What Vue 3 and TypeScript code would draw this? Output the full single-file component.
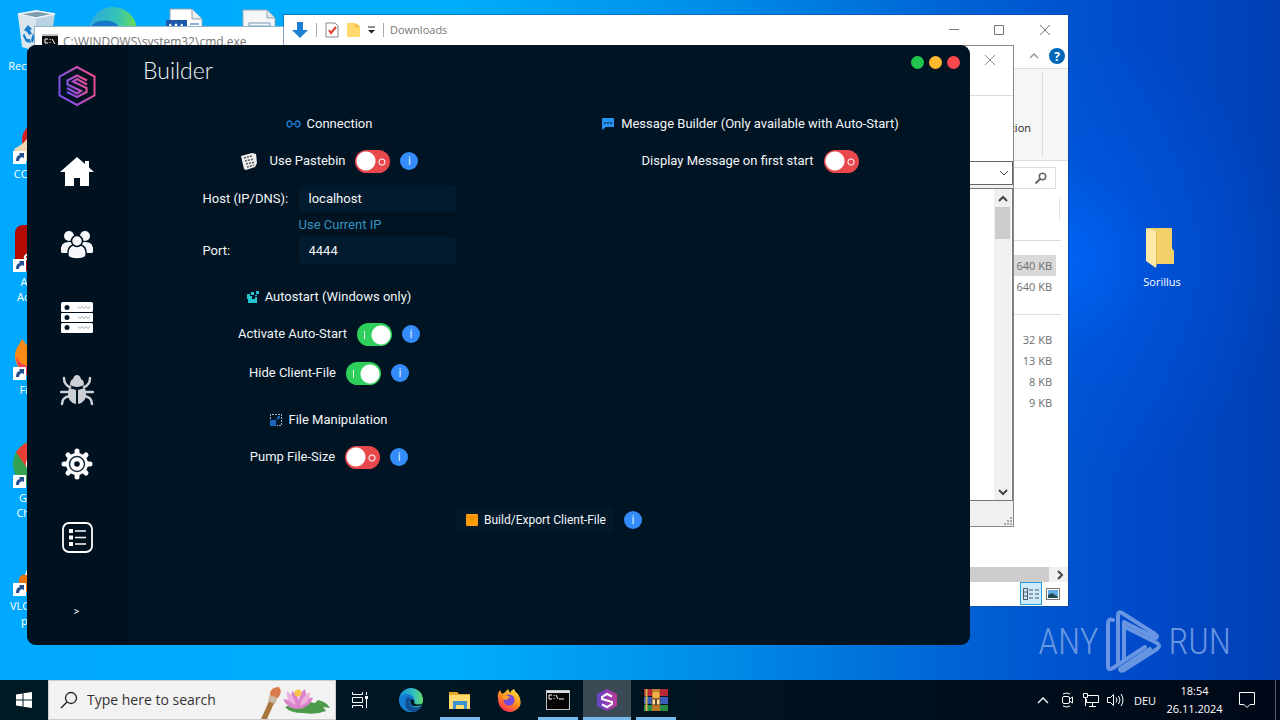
<script setup lang="ts">
import { ref } from 'vue'

interface FileGroup {
  id: string
  rows: { size: string; selected: boolean }[]
}

const usePastebin = ref(false)
const autoStart = ref(true)
const hideClient = ref(true)
const pumpSize = ref(false)
const displayMessage = ref(false)
const host = ref('localhost')
const port = ref('4444')

const groups: FileGroup[] = [
  { id: 'recent', rows: [{ size: '640 KB', selected: true }, { size: '640 KB', selected: false }] },
  {
    id: 'older',
    rows: [
      { size: '32 KB', selected: false },
      { size: '13 KB', selected: false },
      { size: '8 KB', selected: false },
      { size: '9 KB', selected: false },
    ],
  },
]
</script>

<template>
  <div class="screen">
    <main class="desktop">
      <div class="shortcuts">
        <div class="shortcut">
          <svg viewBox="0 0 48 48" width="48" height="48">
            <path d="M5 6 22 2 42 6 36 42 10 39Z" fill="#b9d3e2" />
            <path d="M5 6 23 10 42 6 24 3Z" fill="#7f9cae" stroke="#eef5f9" stroke-width="1.5" />
            <path d="M5 7 23 11 22 43 9 39Z" fill="#d9e6ee" />
            <path d="M11 22l4-5 4 4-2 1 2 4-3 1-2-3zM11 25l3 6h3l1 4-5-1-3-6zM20 25l2 6-3 4-1-3z" fill="#1c7fd0" />
          </svg>
          <span>Recycle Bin</span>
        </div>
        <div class="shortcut">
          <svg viewBox="0 0 48 48" width="48" height="48">
            <circle cx="27" cy="24" r="18" fill="#d8201f" />
            <path d="M1 33Q12 28 18 17l12 10-6 18H5Z" fill="#f0d9b0" />
            <rect y="35" width="13" height="13" fill="#fff" />
            <path d="M3 45q0-6 4-6l-1-2h5v5l-2-1q-3 1-3 4z" fill="#24508f" />
          </svg>
          <span>CCleaner</span>
        </div>
        <div class="shortcut">
          <svg viewBox="0 0 48 48" width="48" height="48">
            <rect x="2" y="1" width="46" height="46" rx="8" fill="#b30b00" />
            <path d="M12 34c-3-5 24-10 25-5S24 25 22 14s7-4 1 8-10 15-11 12z" fill="none" stroke="#fff" stroke-width="2" />
            <rect y="35" width="13" height="13" fill="#fff" />
            <path d="M3 45q0-6 4-6l-1-2h5v5l-2-1q-3 1-3 4z" fill="#24508f" />
          </svg>
          <span>Adobe<br>Acrobat</span>
        </div>
        <div class="shortcut">
          <svg viewBox="0 0 48 48" width="48" height="48">
            <path d="M2 26C1 17 6 14 9 7q3 3 4 6Q25 1 38 10q9 8 8 20Q42 45 26 46 5 44 2 26Z" fill="#ff8a16" />
            <path d="M3 24q5 14 25 10L24 46Q5 44 3 24Z" fill="#ff3c55" />
            <circle cx="25" cy="26" r="10" fill="#7542e5" />
            <rect y="35" width="13" height="13" fill="#fff" />
            <path d="M3 45q0-6 4-6l-1-2h5v5l-2-1q-3 1-3 4z" fill="#24508f" />
          </svg>
          <span>Firefox</span>
        </div>
        <div class="shortcut">
          <svg viewBox="0 0 48 48" width="48" height="48">
            <circle cx="24" cy="24" r="24" fill="#35a153" />
            <path d="M3 12Q14-3 30 1q12 3 16 13H24L14 28Z" fill="#ec3e34" />
            <path d="M46 14q6 20-12 32H24l10-16-2-16Z" fill="#fbc116" />
            <circle cx="24" cy="24" r="11" fill="#fff" />
            <circle cx="24" cy="24" r="8" fill="#4285f4" />
            <rect y="35" width="13" height="13" fill="#fff" />
            <path d="M3 45q0-6 4-6l-1-2h5v5l-2-1q-3 1-3 4z" fill="#24508f" />
          </svg>
          <span>Google<br>Chrome</span>
        </div>
        <div class="shortcut">
          <svg viewBox="0 0 48 48" width="48" height="48">
            <path d="M20 3h8l10 30H10Z" fill="#fff" />
            <path d="M17 12h14l3 9H14ZM6 31q2-5 6-4h24l6 17H5Z" fill="#e9740c" />
            <rect y="35" width="13" height="13" fill="#fff" />
            <path d="M3 45q0-6 4-6l-1-2h5v5l-2-1q-3 1-3 4z" fill="#24508f" />
          </svg>
          <span>VLC media<br>player</span>
        </div>
      </div>

      <div class="shortcuts-top">
        <svg viewBox="0 0 48 48" width="48" height="48">
          <defs>
            <linearGradient id="edgeTop" x1="0" x2="1"><stop offset="0" stop-color="#2fa9e0" /><stop offset=".6" stop-color="#35c3b5" /><stop offset="1" stop-color="#6edc52" /></linearGradient>
          </defs>
          <circle cx="24" cy="24" r="24" fill="url(#edgeTop)" />
          <path d="M0 22Q8 10 24 15q8 3 7 12L10 44Q0 36 0 22Z" fill="#1676c8" />
        </svg>
        <svg viewBox="0 0 48 48" width="48" height="48">
          <path d="M8 2h22l10 10v34H8Z" fill="#fff" stroke="#8aa0b0" />
          <path d="M30 2v10h10" fill="#e8eef2" stroke="#8aa0b0" />
          <rect x="4" y="13" width="21" height="22" fill="#1e58a8" />
          <path d="m8 17 3 12 3-12 3 12 3-12" fill="none" stroke="#fff" stroke-width="2" />
          <path d="M28 17h9M28 21h9" stroke="#1e58a8" />
        </svg>
        <svg viewBox="0 0 48 48" width="48" height="48">
          <path d="M8 3h24l8 8v35H8Z" fill="#f4f6f8" stroke="#9aa8b5" />
          <path d="M32 3v8h8" fill="#dde4ea" stroke="#9aa8b5" />
          <path d="M14 16h21v10H14ZM14 19h21" fill="none" stroke="#7898b8" />
        </svg>
      </div>

      <div class="folder">
        <svg viewBox="0 0 48 48" width="48" height="48">
          <path d="M10 4h24v20l2 3v13H12Z" fill="#f3cf68" />
          <path d="M8 4 18 7v37l-10-7Z" fill="#ffe9a6" />
          <path d="M18 7v37l1-5V8Z" fill="#e7bd53" />
        </svg>
        <span>Sorillus</span>
      </div>

      <div class="watermark">
        <span>ANY</span>
        <svg viewBox="0 0 56 64" width="56" height="64" fill="none" stroke="currentColor" stroke-width="4" stroke-linejoin="round" stroke-linecap="round">
          <path d="M8 10q-5-2-5 4v42q0 5 5 2l32-21M13 52V5q0-4 4-2l33 21q4 3 0 4l-31-16v38" />
          <path d="m20 17 32 16q4 3 0 6L19 60q-4 2-4-1l30-20" />
        </svg>
        <span>RUN</span>
      </div>

      <section class="window cmd">
        <svg viewBox="0 0 16 14" width="16" height="14">
          <rect width="16" height="14" fill="#111" /><path d="M0 1h16" stroke="#c0c0c0" stroke-width="2" />
          <path d="M6 5H3v4h3M8 5v1M8 8v1M10 5l3 5" fill="none" stroke="#fff" />
        </svg>
        <span>C:\WINDOWS\system32\cmd.exe</span>
      </section>

      <section class="window explorer">
        <header class="ex-title">
          <svg viewBox="0 0 16 18" width="16" height="18"><path d="M5 1h6v8h5l-8 8-8-8h5Z" fill="#1f7fd0" /></svg>
          <i class="bar"></i>
          <svg viewBox="0 0 14 16" width="14" height="16"><path d="M1 1h9l3 3v11H1Z" fill="#fff" stroke="#888" /><path d="m4 8 2 3 5-6" fill="none" stroke="#e0402a" stroke-width="2" /></svg>
          <svg viewBox="0 0 13 16" width="13" height="16"><path d="M0 1h8l5 3v11H0Z" fill="#ffd969" /><path d="M8 1v4h5" fill="#f3bd45" /></svg>
          <svg class="drop" viewBox="0 0 7 8" width="7" height="8"><path d="M0 1h7" stroke="#222" /><path d="M0 4h7L3.500 7.500Z" fill="#222" /></svg>
          <i class="bar"></i>
          <span>Downloads</span>
          <svg class="controls" viewBox="0 0 104 14" width="104" height="14" fill="none" stroke="#777">
            <path d="M1 6.500h10M46.500 2.500h9v9h-9ZM92 2l10 10M102 2 92 12" />
          </svg>
        </header>
        <div class="ex-tabs">
          <svg viewBox="0 0 10 6" width="10" height="6"><path d="m1 5 4-4 4 4" fill="none" stroke="#999" stroke-width="1.500" /></svg>
          <button class="help" type="button">?</button>
        </div>
        <div class="ribbon"><span>Selection</span></div>
        <div class="ex-search">
          <svg viewBox="0 0 12 12" width="12" height="12" fill="none" stroke="#666"><circle cx="7.500" cy="4.500" r="3.200" stroke-width="1.500" /><path d="m5 7-4.500 4.500" stroke-width="2" /></svg>
        </div>
        <div class="ex-body">
          <div class="col-head"></div>
          <table v-for="group in groups" :key="group.id">
            <tbody>
              <tr v-for="(row, i) in group.rows" :key="i" :class="{ selected: row.selected }">
                <td>{{ row.size }}</td>
              </tr>
            </tbody>
          </table>
        </div>
        <div class="h-scroll">
          <i></i>
          <svg viewBox="0 0 8 10" width="8" height="10"><path d="m2 1 4 4-4 4" fill="none" stroke="#444" stroke-width="2" /></svg>
        </div>
        <footer class="ex-status">
          <span class="view on">
            <svg viewBox="0 0 16 14" width="16" height="14" fill="none" stroke="#556"><path d="M.5 1.500h4v11h-4ZM.5 5h4M.5 9h4M6 3h4M12 3h4M6 7h4M12 7h4M6 11h4M12 11h4" /></svg>
          </span>
          <span class="view">
            <svg viewBox="0 0 14 12" width="14" height="12"><rect x=".5" y=".5" width="13" height="11" fill="#fff" stroke="#777" /><path d="M2 2h10v8H2Z" fill="#62aee0" /><path d="m2 7 4-2 6 4v1H2Z" fill="#214c55" /></svg>
          </span>
        </footer>
      </section>

      <section class="window dialog">
        <header>
          <svg viewBox="0 0 12 12" width="12" height="12"><path d="m1 1 10 10M11 1 1 11" stroke="#888" /></svg>
        </header>
        <div class="dlg-tools"></div>
        <div class="combo">
          <svg viewBox="0 0 10 6" width="10" height="6"><path d="m1 1 4 4 4-4" fill="none" stroke="#444" /></svg>
        </div>
        <div class="dlg-list">
          <div class="v-scroll">
            <svg viewBox="0 0 10 8" width="10" height="8"><path d="m1 6 4-4 4 4" fill="none" stroke="#444" stroke-width="2" /></svg>
            <i></i>
            <svg class="down" viewBox="0 0 10 8" width="10" height="8"><path d="m1 2 4 4 4-4" fill="none" stroke="#444" stroke-width="2" /></svg>
          </div>
        </div>
        <footer>
          <svg viewBox="0 0 10 10" width="10" height="10" fill="#aaa"><path d="M7 1h2v2H7zM7 4h2v2H7zM7 7h2v2H7zM4 4h2v2H4zM4 7h2v2H4zM1 7h2v2H1z" /></svg>
        </footer>
      </section>

      <section class="app">
        <nav>
          <svg class="logo" viewBox="0 0 38 42" width="38" height="42" fill="none" stroke="url(#brand)">
            <defs>
              <linearGradient id="brand" x1="0" y1=".7" x2="1" y2=".3"><stop offset="0" stop-color="#7550ee" /><stop offset="1" stop-color="#f0508c" /></linearGradient>
            </defs>
            <path d="m19 2 17.500 9.500v19L19 40 1.500 30.500v-19Z" stroke-width="2" />
            <path d="M29 15.500 19 10.500 9.500 15.500v4L23 26l-4 2.500L9 23M9 27l10 5 9.500-5v-4L15 16.500l4-2.500 10 5.500" stroke-width="2.200" />
          </svg>
          <button type="button" aria-label="Home">
            <svg viewBox="0 0 34 34" width="34" height="34" fill="#fff"><path d="M17 2 0 17h5v14h9v-8h6v8h9V17h5L29 12.500V6h-4v3Z" /></svg>
          </button>
          <button type="button" aria-label="Clients">
            <svg viewBox="0 0 34 34" width="34" height="34" fill="#f5f7fa">
              <circle cx="9" cy="8" r="5" /><circle cx="25" cy="8" r="5" />
              <path d="M1 24q-1-10 7-10h5v11H2zM33 24q1-10-7-10h-5v11h11z" />
              <g stroke="#001120" stroke-width="1.500"><path d="M8 28q-1-11 7-11h4q8 0 7 11-2 3-9 3t-9-3Z" /><circle cx="17" cy="13" r="5.500" /></g>
            </svg>
          </button>
          <button type="button" aria-label="Servers">
            <svg viewBox="0 0 34 34" width="34" height="34" fill="#fff">
              <rect x="1" y="1" width="32" height="10" rx="1.500" /><rect x="1" y="12" width="32" height="9" rx="1" /><rect x="1" y="22" width="32" height="10" rx="1.500" />
              <g fill="#071b29"><circle cx="7" cy="6.500" r="2.500" /><circle cx="7" cy="16.500" r="2.500" /><circle cx="7" cy="26.500" r="2.500" /></g>
              <path d="m18 5.500 2 2 2-2 2 2 2-2 2 2 2-2M18 15.500l2 2 2-2 2 2 2-2 2 2 2-2M18 25.500l2 2 2-2 2 2 2-2 2 2 2-2" fill="none" stroke="#99a4ad" />
            </svg>
          </button>
          <button type="button" aria-label="Debug">
            <svg viewBox="0 0 34 34" width="34" height="34" fill="#ccd0d5">
              <path d="M10 11q0-5 3-6 1-4 4-4t4 4q3 1 3 6-7 4-14 0ZM9 14q4 1 7 2v14Q7 28 8 18ZM25 14q-4 1-7 2v14q9-2 8-12Z" />
              <path d="M4 4q0 7 6 9M30 4q0 7-6 9M1 18h8M33 18h-8M10 22q-8 1-8 8M24 22q8 1 8 8" fill="none" stroke="#ccd0d5" stroke-width="2.500" stroke-linecap="round" />
            </svg>
          </button>
          <button type="button" aria-label="Settings">
            <svg viewBox="0 0 34 34" width="34" height="34">
              <g stroke="#fff" stroke-width="5" stroke-linecap="round"><path d="M17 4v26M4 17h26M8 8l18 18M26 8 8 26" /></g>
              <circle cx="17" cy="17" r="11" fill="#fff" />
              <circle cx="17" cy="17" r="7.500" fill="none" stroke="#1c2c39" stroke-width="1.500" />
              <circle cx="17" cy="17" r="2.800" fill="#001120" />
            </svg>
          </button>
          <button type="button" aria-label="Builder">
            <svg viewBox="0 0 34 34" width="34" height="34" fill="none" stroke="#fff">
              <rect x="3" y="3" width="29" height="29" rx="6" stroke-width="1.800" />
              <path d="M15 11h11M15 17.500h11M15 24h11" stroke-width="1.600" /><path d="M9 11h4M9 17.500h4M9 24h4" stroke-width="4" />
            </svg>
          </button>
          <button class="expand" type="button">&gt;</button>
        </nav>

        <div class="content">
          <header>
            <h1>Builder</h1>
            <div class="dots">
              <button class="green" type="button" aria-label="Minimize"></button>
              <button class="amber" type="button" aria-label="Maximize"></button>
              <button class="red" type="button" aria-label="Close"></button>
            </div>
          </header>

          <div class="columns">
            <div class="col">
              <h2>
                <svg viewBox="0 0 15 10" width="15" height="10" fill="none" stroke="#1c7fe0" stroke-width="1.300"><path d="M6 3.500Q5 2 3.500 2 1 2.500 1 5t2.500 3Q5 8 6 6.500M9 3.500Q10 2 11.500 2 14 2.500 14 5t-2.500 3Q10 8 9 6.500M4.500 5h6" /></svg>
                Connection
              </h2>
              <div class="row">
                <svg class="paste" viewBox="0 0 18 18" width="18" height="18">
                  <path d="m1 4 11-3 4 1 1 9-2 4-9 3-2-1Z" fill="#eee" />
                  <path d="m4 6 8-2M5 9l9-2M6 12l9-2M7 15l7-2" stroke="#555" stroke-width="1.500" stroke-dasharray="2 1" />
                </svg>
                <label for="pastebin">Use Pastebin</label>
                <input id="pastebin" v-model="usePastebin" class="toggle" type="checkbox">
                <button class="info" type="button">i</button>
              </div>
              <div class="form">
                <label for="host">Host (IP/DNS):</label>
                <input id="host" v-model="host" type="text">
                <a href="#">Use Current IP</a>
                <label for="port">Port:</label>
                <input id="port" v-model="port" type="text">
              </div>
              <hr>
              <h2>
                <svg viewBox="0 0 12 12" width="12" height="12" fill="#20c5cf"><path d="M0 3h3v2h2v3h3V6h2v6H1V8H0zM4 1h3v3H4zM9 0h3v3H9zM8 4h2v1H8z" /></svg>
                Autostart (Windows only)
              </h2>
              <div class="row">
                <label for="autostart">Activate Auto-Start</label>
                <input id="autostart" v-model="autoStart" class="toggle" type="checkbox">
                <button class="info" type="button">i</button>
              </div>
              <div class="row">
                <label for="hide">Hide Client-File</label>
                <input id="hide" v-model="hideClient" class="toggle" type="checkbox">
                <button class="info" type="button">i</button>
              </div>
              <hr>
              <h2>
                <svg viewBox="0 0 12 12" width="12" height="12"><path d="M.5 5V.5h11v11H7" fill="none" stroke="#9dbbd6" stroke-dasharray="2 1" /><path d="M0 6h6v6H0zM7 2h3v3l-1-1-2 2-1-1 2-2z" fill="#1667bd" /></svg>
                File Manipulation
              </h2>
              <div class="row">
                <label for="pump">Pump File-Size</label>
                <input id="pump" v-model="pumpSize" class="toggle" type="checkbox">
                <button class="info" type="button">i</button>
              </div>
            </div>
            <div class="col">
              <h2>
                <svg viewBox="0 0 14 12" width="14" height="12"><path d="M1 0h12v9H5l-4 3Z" fill="#2790f2" /><path d="M3 5h2M6 5h2M9 5h2" stroke="#0a3568" stroke-width="1.500" /></svg>
                Message Builder (Only available with Auto-Start)
              </h2>
              <div class="row">
                <label for="message">Display Message on first start</label>
                <input id="message" v-model="displayMessage" class="toggle" type="checkbox">
              </div>
            </div>
          </div>

          <div class="build-row">
            <button class="build" type="button">
              <svg viewBox="0 0 12 12" width="12" height="12"><rect width="12" height="12" rx="1" fill="#ff9d0a" /><path d="M0 3h12M4 3v2h4V3" fill="none" stroke="#e88600" /></svg>
              Build/Export Client-File
            </button>
            <button class="info" type="button">i</button>
          </div>
        </div>
      </section>
    </main>

    <footer class="taskbar">
      <button class="start" type="button" aria-label="Start">
        <svg viewBox="0 0 16 16" width="16" height="16" fill="#fff"><path d="M0 2.500 6.500 1.500v6H0zM7.500 1.300 16 0v7.500H7.500zM0 8.500h6.500v6L0 13.500zM7.500 8.500H16V16l-8.500-1.300z" /></svg>
      </button>
      <div class="search">
        <svg viewBox="0 0 18 18" width="18" height="18" fill="none" stroke="#222"><circle cx="11" cy="7" r="5.500" stroke-width="1.300" /><path d="m7 11-6 6" stroke-width="1.500" /></svg>
        <input type="text" placeholder="Type here to search" aria-label="Search">
        <svg class="art" viewBox="0 0 74 38" width="74" height="38">
          <path d="m11 18 5 2L8 38H2Z" fill="#a8753f" /><path d="m11 13 8 3-3 7-7-3z" fill="#c9b7a0" />
          <path d="M11 14q0-8 9-8 4 5-1 11Z" fill="#d87b4a" />
          <path d="M26 26q16-7 30-4l3-3q9 2 12 8l-7-1 3 4q-10 4-23 2-13 0-18-6Z" fill="#4c9b4b" />
          <path d="M24 18q8 0 12 6-5-7-3-14 6 4 7 10 0-8 6-12 3 8-2 13 4-5 10-4-3 9-14 11-12 0-16-10Z" fill="#dc83cb" />
          <path d="M28 10q7 5 9 14Q26 20 28 10ZM51 11q-8 4-10 14 10-3 10-14Z" fill="#eab0de" />
          <circle cx="39" cy="12" r="3.500" fill="#f5c443" />
        </svg>
      </div>
      <button class="task view-tasks" type="button" aria-label="Task View">
        <svg viewBox="0 0 16 16" width="16" height="16" fill="none" stroke="#fff"><path d="M.5 0v2.500h10V0M.5 16v-2.500h10V16M.5 5.500h10v5H.5ZM14.500 0v3M14.500 7v9" /><path d="M13 5.500h3" stroke-width="3" /></svg>
      </button>
      <button class="task" type="button" aria-label="Edge">
        <svg viewBox="0 0 26 26" width="26" height="26">
          <defs><linearGradient id="edge" x1="0" x2="1"><stop offset="0" stop-color="#1686cf" /><stop offset=".6" stop-color="#34c1c4" /><stop offset="1" stop-color="#67d96a" /></linearGradient></defs>
          <circle cx="13" cy="13" r="12" fill="url(#edge)" />
          <path d="M1 12q5-7 12-4 4 2 3 6-3 2-1 5 4 3 9-1-3 7-11 7Q2 24 1 12Z" fill="#137bd0" />
          <path d="M8 12q-3 11 7 13 7-1 9-7-5 4-10 2-5-4-1-8Q10 8 8 12Z" fill="#124f92" />
          <path d="M13 12q-2 5 2 7 4 1 9-1l1-2q-5 3-9 0 2-3-3-4Z" fill="#001823" />
        </svg>
      </button>
      <button class="task open" type="button" aria-label="File Explorer">
        <svg viewBox="0 0 24 20" width="24" height="20"><path d="M1 2h8l2 2h11v15H1Z" fill="#e8a92b" /><path d="M1 5h21v14H1Z" fill="#ffdb70" /><path d="M5 19v-8h14v8h-3v-4H8v4Z" fill="#3c91d0" /></svg>
      </button>
      <button class="task" type="button" aria-label="Firefox">
        <svg viewBox="0 0 26 26" width="26" height="26">
          <defs><linearGradient id="fox" x1=".8" y1="0" x2=".2" y2="1"><stop offset="0" stop-color="#ffe33b" /><stop offset=".5" stop-color="#ff8a20" /><stop offset="1" stop-color="#fb235b" /></linearGradient></defs>
          <path d="M2 11Q1 7 4 3l2 4q4-2 6-5l2 4q1-3 4-4 1 3 4 5 4 6 2 12-4 6-11 6Q2 23 2 11Z" fill="url(#fox)" />
          <circle cx="13" cy="13" r="5.500" fill="#7848dd" /><path d="M6 9q5-2 9 2-3-1-4 2-5 0-5-4Z" fill="#ff9d27" />
        </svg>
      </button>
      <button class="task open" type="button" aria-label="Command Prompt">
        <svg viewBox="0 0 24 20" width="24" height="20"><rect x=".5" y=".5" width="23" height="19" fill="#050505" stroke="#bfc4c7" /><path d="M1 2h22" stroke="#dce0e2" stroke-width="2" /><path d="M6 5H3v4h3M8 5v1M8 8v1M10 5l2 4M13 9h5" fill="none" stroke="#fff" /></svg>
      </button>
      <button class="task active" type="button" aria-label="Sorillus">
        <svg viewBox="0 0 22 24" width="22" height="24">
          <defs><linearGradient id="tile" x1="0" x2="1"><stop offset="0" stop-color="#6744cb" /><stop offset="1" stop-color="#ba3b9b" /></linearGradient></defs>
          <path d="m11 1 10 5v12l-10 5-10-5V6Z" fill="url(#tile)" />
          <path d="m16 8.500-5-2.500-5 3v2l10 3v2l-5 3-5-2.500" fill="none" stroke="#fff" stroke-width="2" />
        </svg>
      </button>
      <button class="task open" type="button" aria-label="WinRAR">
        <svg viewBox="0 0 26 24" width="26" height="24">
          <rect x="1" y="1" width="24" height="7" fill="#b62832" /><rect x="1" y="9" width="24" height="7" fill="#3a5ebc" /><rect x="1" y="17" width="24" height="6" fill="#2b8c43" />
          <path d="M3.500 1v22" stroke="#d4b04c" stroke-width="2" /><path d="M9 1h8v22H9Z" fill="#b9792c" /><circle cx="13" cy="7" r="3.500" fill="#f2b04d" /><path d="M9 11h8v6H9Z" fill="#f4e3b1" stroke="#6d3e12" /><path d="M13 11v6" stroke="#6d3e12" stroke-width="2" />
        </svg>
      </button>

      <div class="tray">
        <button type="button" aria-label="Hidden icons"><svg viewBox="0 0 12 8" width="12" height="8"><path d="m1 7 5-5 5 5" fill="none" stroke="#fff" stroke-width="1.300" /></svg></button>
        <button type="button" aria-label="Camera"><svg viewBox="0 0 12 16" width="12" height="16" fill="none" stroke="#fff"><path d="M2 2q4-2 7 0M2 14q4 2 7 0" /><rect x="1.500" y="4.500" width="7" height="7" rx="1.500" /><path d="m8.500 7 3-2v6l-3-2" /></svg></button>
        <button type="button" aria-label="Network"><svg viewBox="0 0 16 14" width="16" height="14" fill="none" stroke="#fff"><path d="M5 2.500h10.500v7H3.500V6M9.500 10v3M6 13.500h7M.5.500h4v4h-4ZM2.500 5v8" /></svg></button>
        <button type="button" aria-label="Volume"><svg viewBox="0 0 17 14" width="17" height="14" fill="none" stroke="#fff"><path d="M.5 4.500h3l3-3v11l-3-3h-3ZM9 4.500q2 2.500 0 5M11.500 3q3 4 0 8M14 1q4 6 0 12" /></svg></button>
        <span class="lang">DEU</span>
        <time>18:54<br>26.11.2024</time>
        <button class="notes" type="button" aria-label="Notifications"><svg viewBox="0 0 16 16" width="16" height="16"><path d="M.5.500h15v12H11l-3 3-3-3H.5Z" fill="none" stroke="#fff" /></svg></button>
        <i class="peek"></i>
      </div>
    </footer>
  </div>
</template>

<style>
body { margin: 0; }
</style>

<style scoped>
* { box-sizing: border-box; }
button { border: 0; padding: 0; background: none; color: inherit; font: inherit; display: flex; align-items: center; justify-content: center; }
svg { display: block; flex: none; }
.screen { min-height: 100vh; display: flex; flex-direction: column; font: 11px/15px "Open Sans", "Noto Sans", sans-serif; }
.desktop {
  position: relative; flex: 1; overflow: hidden;
  background:
    radial-gradient(circle at 83% 38%, #0063f5 0, rgba(0, 90, 230, 0.5) 8%, rgba(0, 70, 200, 0) 20%),
    linear-gradient(90deg, #00a8ff 0, #00aefb 35%, #008ee8 55%, #0062d4 75%, #004bcb 88%, #003fb4 100%);
}
.shortcuts { position: absolute; left: 0; top: 8px; width: 74px; display: grid; grid-auto-rows: 108px; }
.shortcut, .folder { display: flex; flex-direction: column; align-items: center; gap: 2px; color: #fff; text-align: center; }
.shortcuts-top { position: absolute; left: 89px; top: 7px; display: flex; gap: 25px; }
.folder { position: absolute; right: 80px; top: 224px; width: 76px; }
.watermark { position: absolute; right: 49px; bottom: 6px; display: flex; align-items: center; gap: 7px; color: #7ba3e6; font: 300 36px/64px "Liberation Sans Narrow", "Roboto Condensed", "DejaVu Sans Condensed", sans-serif; opacity: 0.85; }

.window { position: absolute; background: #fff; }
.cmd { left: 34px; right: 900px; top: 26px; height: 300px; padding: 7px; border: 1px solid #8db5cb; display: flex; gap: 5px; font-size: 12px; color: #777; }
.explorer { left: 284px; right: 212px; top: 15px; height: 591px; display: flex; flex-direction: column; box-shadow: 0 0 0 1px rgba(20, 70, 140, 0.5); }
.ex-title { height: 29px; flex: none; padding: 0 16px 0 8px; display: flex; align-items: center; gap: 8px; color: #777; }
.ex-title .bar { width: 1px; height: 14px; background: #aaa; }
.ex-title .bar + span { margin-left: -2px; }
.ex-title .controls { margin-left: auto; }
.ex-tabs { height: 25px; flex: none; display: flex; align-items: center; justify-content: flex-end; gap: 10px; padding-right: 3px; border-bottom: 1px solid #ddd; }
.help { width: 16px; height: 16px; border-radius: 50%; background: #0067b8; color: #fff; font-weight: 700; font-size: 12px; }
.ribbon { height: 92px; flex: none; background: #f5f6f7; border-bottom: 1px solid #ddd; display: flex; justify-content: flex-end; align-items: center; padding: 3px 25px 3px 0; }
.ribbon span { height: 100%; display: flex; align-items: center; padding: 26px 11px 0 0; border-right: 1px solid #ddd; color: #222; }
.ex-search { height: 22px; flex: none; margin: 6px 12px 0 300px; border: 1px solid #ddd; display: flex; align-items: center; justify-content: flex-end; padding-right: 8px; }
.ex-body { flex: 1; padding-right: 7px; }
.col-head { height: 24px; margin: 8px 1px 19px 0; border-right: 1px solid #e2e2f0; }
.ex-body table { width: 100%; border-collapse: separate; border-spacing: 0; border-top: 1px solid #ddd; padding: 14px 5px 17px 0; color: #6d6d6d; }
.ex-body td { height: 21px; padding: 0 4px 0 0; text-align: right; }
.selected td { background: #d9d9d9; }
.h-scroll { height: 15px; flex: none; background: #f0f0f0; display: flex; align-items: center; gap: 7px; padding-right: 4px; }
.h-scroll i { flex: 1; height: 15px; background: #cdcdcd; }
.ex-status { height: 24px; flex: none; display: flex; justify-content: flex-end; padding-right: 4px; }
.view { width: 22px; height: 23px; display: flex; align-items: center; justify-content: center; }
.view.on { background: #cdeaf8; border: 1px solid #26a0da; }

.dialog { left: 560px; right: 266px; top: 45px; height: 482px; border: 1px solid #888; display: flex; flex-direction: column; background: #f0f0f0; }
.dialog header { height: 50px; flex: none; background: #fff; border-bottom: 1px solid #ddd; display: flex; justify-content: flex-end; padding: 8px 17px 0 0; }
.dlg-tools { height: 65px; flex: none; background: #fff; }
.combo { height: 24px; flex: none; background: #fff; border: 1px solid #666; display: flex; justify-content: flex-end; align-items: center; padding-right: 3px; }
.dlg-list { flex: 1; margin-top: 3px; background: #fff; border: 1px solid #777; display: flex; justify-content: flex-end; }
.v-scroll { width: 17px; background: #f0f0f0; display: flex; flex-direction: column; align-items: center; padding: 6px 1px 4px; margin-right: 1px; }
.v-scroll i { width: 100%; height: 32px; margin-top: 4px; background: #cdcdcd; }
.v-scroll .down { margin-top: auto; }
.dialog footer { height: 25px; flex: none; display: flex; justify-content: flex-end; align-items: flex-end; }

.app { position: absolute; left: 27px; right: 310px; top: 45px; min-height: 600px; display: flex; border-radius: 9px; overflow: hidden; background: #001424; color: #f2f5f7; font: 13px/20px Roboto, sans-serif; }
nav { width: 101px; flex: none; padding-right: 2px; background: #001120; display: flex; flex-direction: column; align-items: center; }
.logo { margin: 20px 0 28px; }
nav button { width: 100%; height: 73px; }
nav .expand { height: 72px; padding-top: 6px; font-size: 11px; }
.content { flex: 1; }
.content header { height: 69px; display: flex; justify-content: space-between; padding: 11px 10px 0 15px; }
h1 { margin: 0; font: 300 23px/28px Lato, sans-serif; }
.dots { display: flex; gap: 5px; }
.dots button { width: 13px; height: 13px; border-radius: 50%; }
.green { background: #1fc64b; } .amber { background: #ffb92e; } .red { background: #fb484f; }
.columns { display: grid; grid-template-columns: 402fr 440fr; }
.col { display: flex; flex-direction: column; }
h2 { margin: 0 0 15px; font: inherit; display: flex; align-items: center; justify-content: center; gap: 6px; }
.row { display: flex; align-items: center; justify-content: center; gap: 10px; height: 24px; }
.row + .row { margin-top: 15px; }
.paste { margin-right: 2px; }
.toggle {
  appearance: none; margin: 0; width: 35px; height: 23px; border-radius: 12px;
  background:
    radial-gradient(circle at 11px 11px, #fff 9px, transparent 10px),
    radial-gradient(circle at 27px 12px, transparent 2px, #fff 3px, #fff 3px, transparent 4px),
    #e8474c;
}
.toggle:checked { background: radial-gradient(circle at 24px 12px, #fff 9px, transparent 10px), linear-gradient(#e4ffe9, #e4ffe9) 7px 8px / 1px 8px no-repeat, #2fcf5b; }
.info { width: 18px; height: 18px; border-radius: 50%; background: #338cfa; color: #d9e9ff; font-size: 12px; line-height: 18px; }
.form { display: grid; grid-template-columns: 96px 157px; grid-template-rows: 27px 25px 27px; align-items: center; justify-content: center; margin-top: 12px; }
.form input { width: 100%; height: 27px; border: 0; border-radius: 4px; padding: 0 10px; background: #021b2e; color: #f2f5f7; font: inherit; }
.form a { grid-column: 2; color: #3793bd; text-decoration: none; }
hr { width: 84%; height: 1px; margin: 12px auto 10px; border: 0; background: #001020; }
.row + hr { margin-top: 14px; }
.build-row { display: flex; justify-content: center; align-items: center; gap: 10px; margin-top: 38px; }
.build { height: 25px; padding: 0 8px 0 10px; gap: 6px; border-radius: 4px; background: #02192a; font-size: 12px; }

.taskbar { height: 40px; display: flex; background: linear-gradient(90deg, #001a26, #00131f 60%, #000817); color: #fff; }
.start { width: 48px; }
.search { width: 288px; background: #f2f2f2; border: 1px solid #ccc; display: flex; align-items: center; padding-left: 11px; gap: 9px; }
.search input { flex: 1; min-width: 0; border: 0; padding: 0; background: none; font: 14px/20px "Open Sans", sans-serif; }
.search input::placeholder { color: #333; opacity: 1; }
.art { margin-right: 2px; }
.task { width: 48px; margin-right: 1px; border: solid transparent; border-width: 3px 0; }
.task.view-tasks { margin-right: 3px; }
.task.open { background: linear-gradient(#76b9ed, #76b9ed) center bottom / 40px 3px no-repeat border-box; }
.task.active { background: #3a4a55; border-bottom-color: #76b9ed; }
.tray { margin-left: auto; display: flex; align-items: center; }
.tray button { width: 24px; height: 100%; }
.lang { width: 36px; text-align: center; font-size: 11px; }
time { width: 63px; text-align: center; font-size: 11px; line-height: 18px; }
.tray .notes { width: 42px; }
.peek { width: 1px; height: 100%; margin: 0 4px 0 7px; background: #56606b; }
</style>
